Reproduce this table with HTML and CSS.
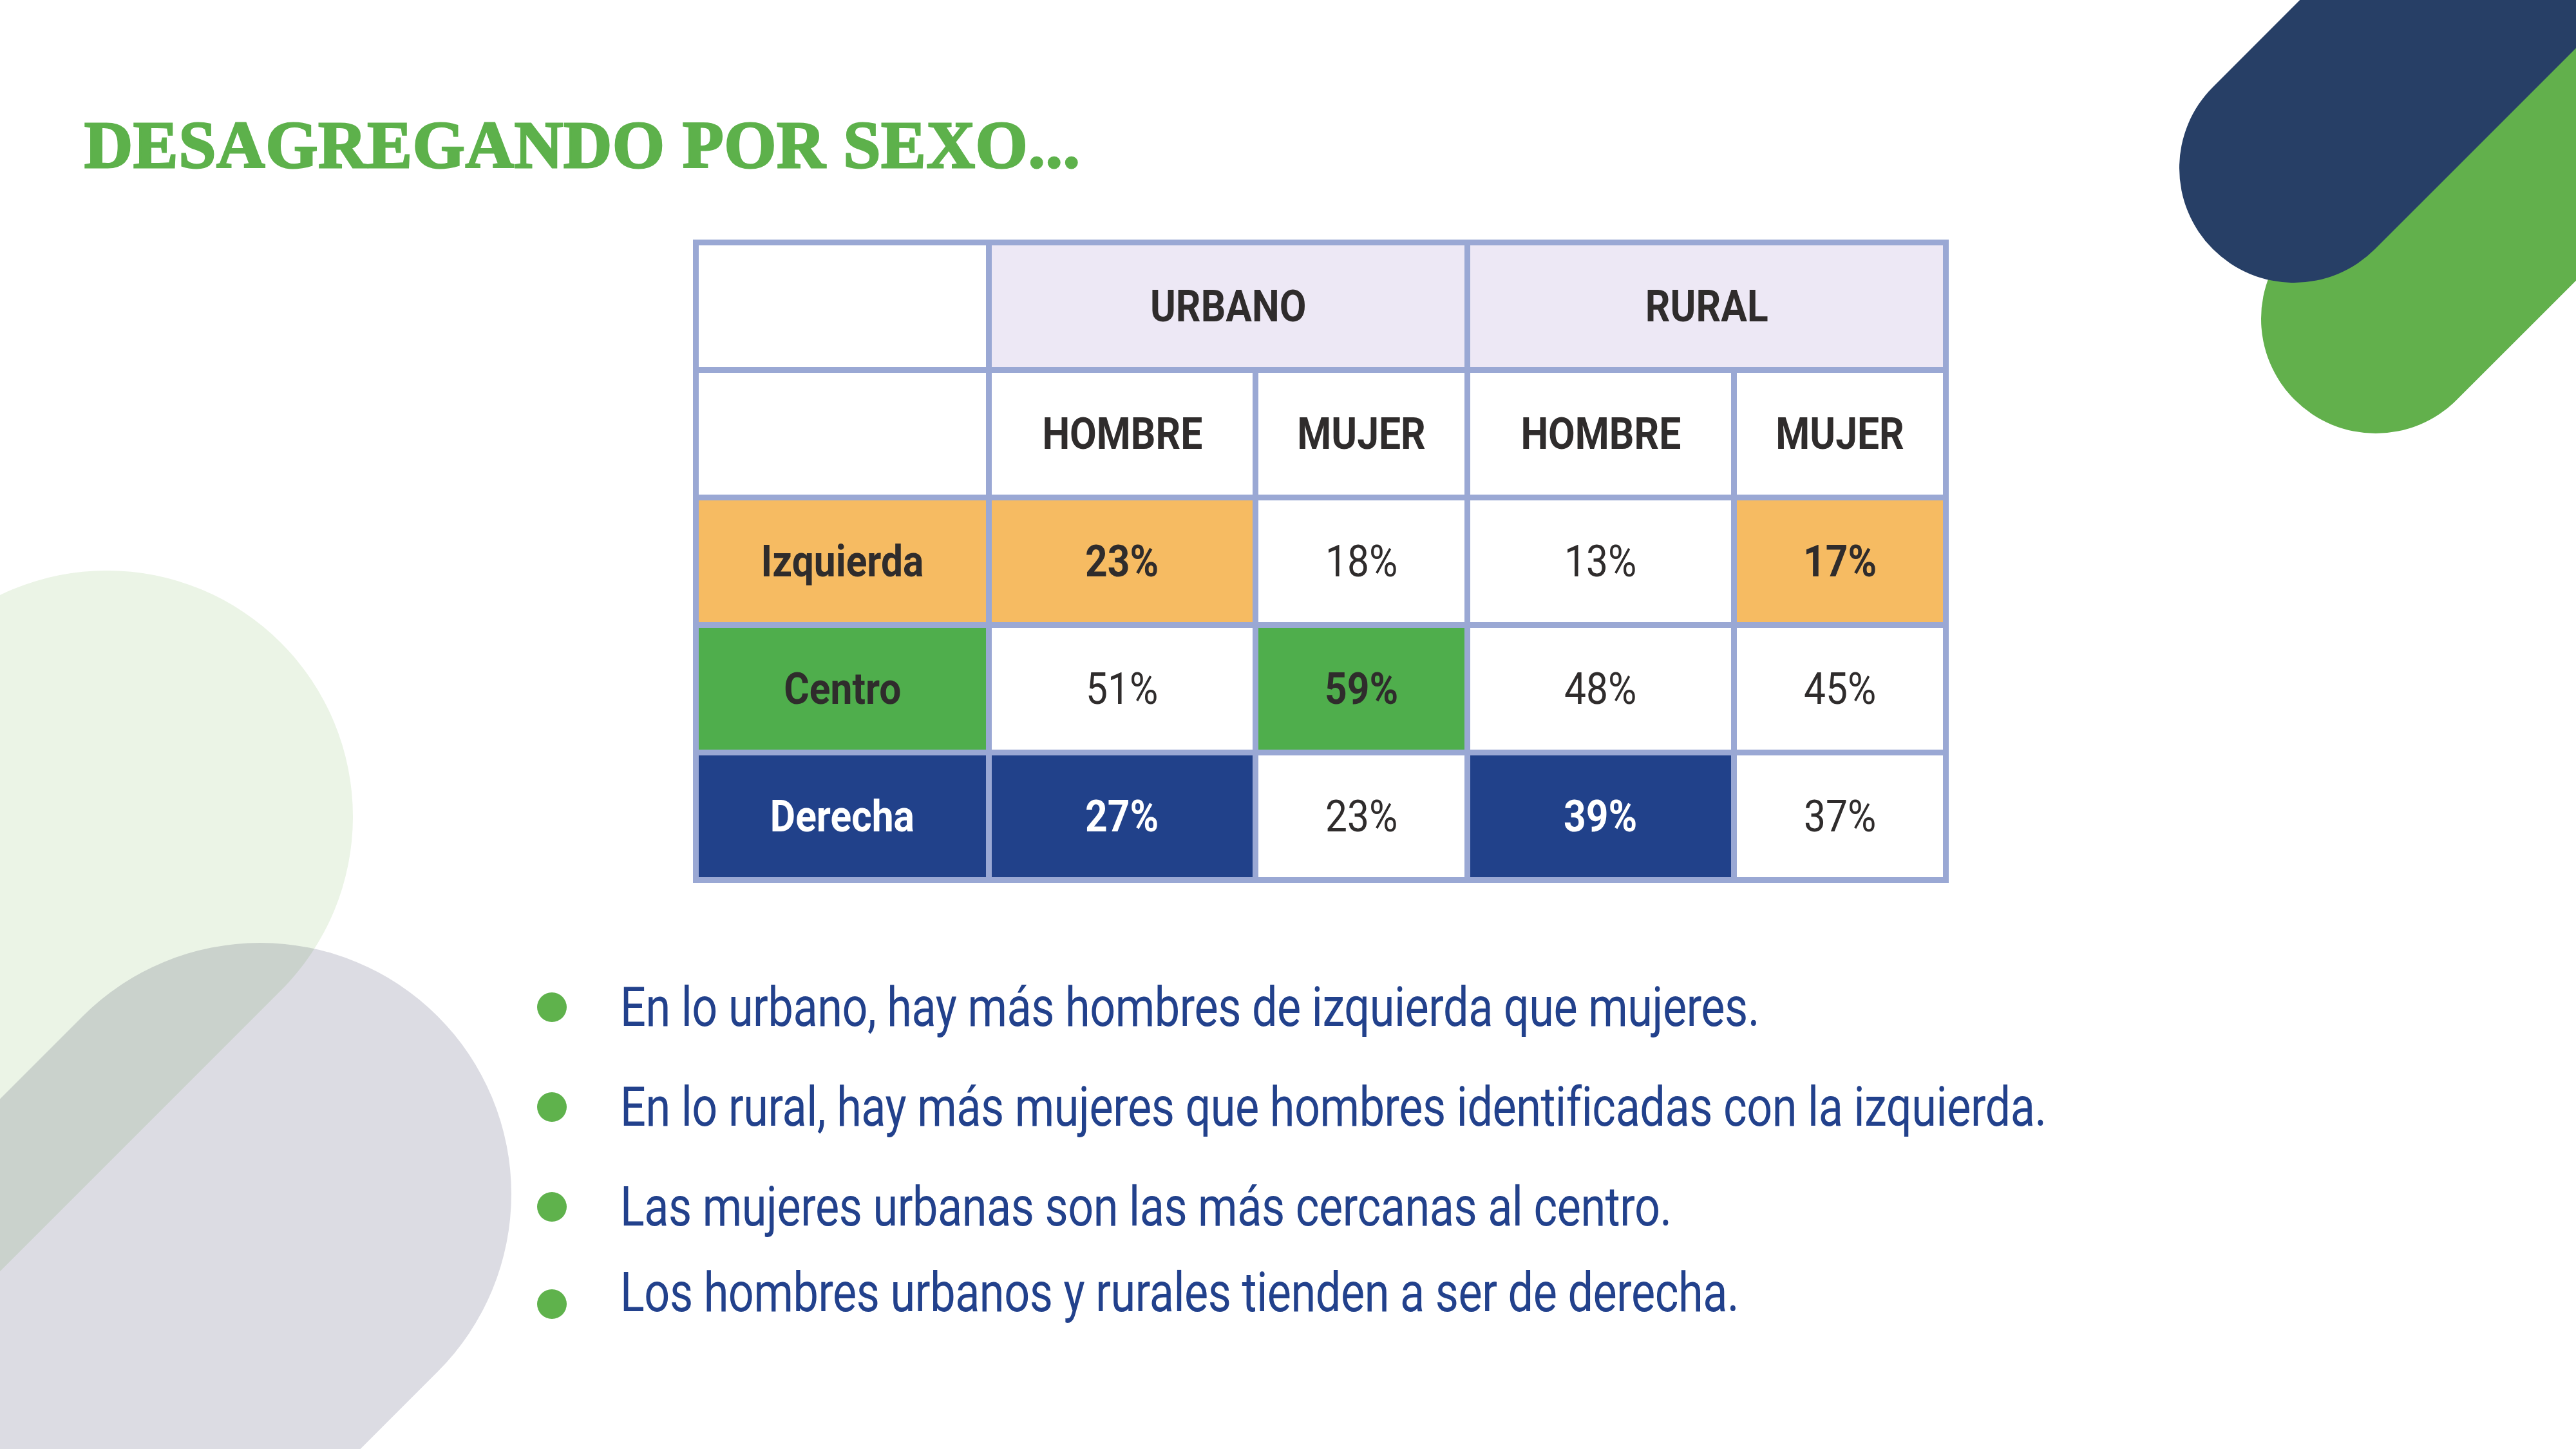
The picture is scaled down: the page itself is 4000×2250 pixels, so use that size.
FILE: index.html
```html
<!DOCTYPE html>
<html lang="es">
<head>
<meta charset="utf-8">
<title>Desagregando por sexo</title>
<link rel="stylesheet" href="styles.css">
</head>
<body>
<div class="slide">
  <svg class="deco" viewBox="0 0 4000 2250" width="4000" height="2250" aria-hidden="true">
    <line x1="166" y1="1268" x2="-1334" y2="2768" class="pill-mint" />
    <line x1="404" y1="1854" x2="-1096" y2="3354" class="pill-grey" />
    <line x1="3689" y1="495" x2="4789" y2="-605" class="pill-green" />
    <line x1="3562" y1="261" x2="4662" y2="-839" class="pill-navy" />
  </svg>

  <h1 class="title">DESAGREGANDO POR SEXO...</h1>

  <table class="grid">
    <colgroup>
      <col class="c-label">
      <col class="c-wide">
      <col class="c-narrow">
      <col class="c-wide">
      <col class="c-narrow">
    </colgroup>
    <tr>
      <td class="blank"></td>
      <td class="group" colspan="2"><span class="tx b">URBANO</span></td>
      <td class="group" colspan="2"><span class="tx b">RURAL</span></td>
    </tr>
    <tr>
      <td class="blank"></td>
      <td><span class="tx b">HOMBRE</span></td>
      <td><span class="tx b">MUJER</span></td>
      <td><span class="tx b">HOMBRE</span></td>
      <td><span class="tx b">MUJER</span></td>
    </tr>
    <tr>
      <td class="orange"><span class="tx b">Izquierda</span></td>
      <td class="orange"><span class="tx b">23%</span></td>
      <td><span class="tx">18%</span></td>
      <td><span class="tx">13%</span></td>
      <td class="orange"><span class="tx b">17%</span></td>
    </tr>
    <tr>
      <td class="green"><span class="tx b">Centro</span></td>
      <td><span class="tx">51%</span></td>
      <td class="green"><span class="tx b">59%</span></td>
      <td><span class="tx">48%</span></td>
      <td><span class="tx">45%</span></td>
    </tr>
    <tr>
      <td class="navy"><span class="tx b">Derecha</span></td>
      <td class="navy"><span class="tx b">27%</span></td>
      <td><span class="tx">23%</span></td>
      <td class="navy"><span class="tx b">39%</span></td>
      <td><span class="tx">37%</span></td>
    </tr>
  </table>

  <ul class="notes">
    <li><span class="dot"></span><span class="note">En lo urbano, hay más hombres de izquierda que mujeres.</span></li>
    <li><span class="dot"></span><span class="note">En lo rural, hay más mujeres que hombres identificadas con la izquierda.</span></li>
    <li><span class="dot"></span><span class="note">Las mujeres urbanas son las más cercanas al centro.</span></li>
    <li class="last"><span class="dot"></span><span class="note">Los hombres urbanos y rurales tienden a ser de derecha.</span></li>
  </ul>
</div>
</body>
</html>
```

FILE: styles.css
```css
* { box-sizing: border-box; }

html, body {
  margin: 0;
  padding: 0;
  background: #ffffff;
}

.slide {
  position: relative;
  width: 4000px;
  height: 2250px;
  overflow: hidden;
  background: #ffffff;
  display: flex;
  flex-direction: column;
  align-items: flex-start;
}

.deco {
  position: absolute;
  left: 0;
  top: 0;
  z-index: 0;
}

.pill-mint { stroke: #ebf4e6; stroke-width: 764; stroke-linecap: round; }
.pill-grey { stroke: #dcdce3; stroke-width: 780; stroke-linecap: round; mix-blend-mode: multiply; }
.pill-green { stroke: #62b04c; stroke-width: 356; stroke-linecap: round; }
.pill-navy { stroke: #273f66; stroke-width: 356; stroke-linecap: round; }

.title {
  position: relative;
  z-index: 1;
  margin: 0;
  padding: 173px 0 0 131px;
  font-family: "Liberation Serif", "DejaVu Serif", serif;
  font-weight: 700;
  font-size: 104px;
  line-height: 104px;
  letter-spacing: 1px;
  color: #5db14b;
  -webkit-text-stroke: 3px #5db14b;
  white-space: nowrap;
}

.grid {
  position: relative;
  z-index: 1;
  margin: 95px 0 0 1076px;
  width: 1949px;
  table-layout: fixed;
  border-collapse: separate;
  border-spacing: 9px;
  background: #9aa8d4;
  font-family: Roboto, "Liberation Sans", sans-serif;
  color: #2f2c2c;
}

.c-label { width: 446px; }
.c-wide { width: 405px; }
.c-narrow { width: 320px; }

.grid td {
  height: 189px;
  padding: 0;
  background: #ffffff;
  text-align: center;
  vertical-align: middle;
  font-size: 68px;
  line-height: 1;
}

.grid td.group { background: #ede8f5; }
.grid td.orange { background: #f6bb62; }
.grid td.green { background: #4fae4c; }
.grid td.navy { background: #21418a; color: #ffffff; }

.tx {
  display: inline-block;
  font-weight: 400;
  white-space: nowrap;
  transform: scaleX(0.89);
}
.tx.b { font-weight: 700; }

.notes {
  position: relative;
  z-index: 1;
  list-style: none;
  margin: 143px 0 0 834px;
  padding: 0;
  font-family: Roboto, "Liberation Sans", sans-serif;
  font-size: 86px;
  color: #22418c;
}

.notes li {
  display: flex;
  align-items: center;
  height: 100px;
  line-height: 100px;
}

.notes li + li { margin-top: 55px; }
.notes li.last { margin-top: 33px; }

.dot {
  flex: none;
  width: 46px;
  height: 46px;
  border-radius: 50%;
  background: #5fb24c;
  margin-right: 83px;
}

.notes li.last .dot { margin-top: 36px; }

.note {
  display: inline-block;
  white-space: nowrap;
  transform: scaleX(0.815);
  transform-origin: left center;
  letter-spacing: -0.5px;
}
```
